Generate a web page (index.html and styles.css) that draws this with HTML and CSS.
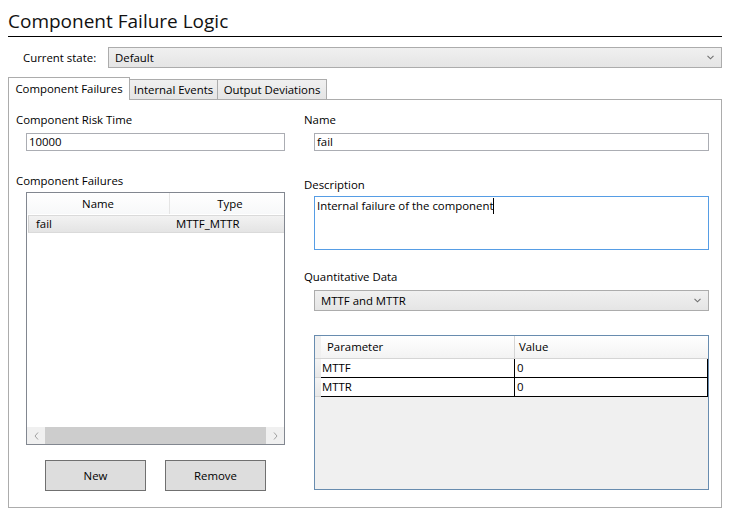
FILE: index.html
```html
<!DOCTYPE html>
<html>
<head>
<meta charset="utf-8">
<title>Component Failure Logic</title>
<link rel="stylesheet" href="styles.css">
</head>
<body>
<div class="window">
  <div class="title">Component Failure Logic</div>

  <div class="state-row">
    <span class="state-label">Current state:</span>
    <div class="combo">
      <span>Default</span>
      <svg class="chev" width="7" height="5" viewBox="0 0 7 5"><path d="M0.5 0.8 L3.5 3.8 L6.5 0.8" fill="none" stroke="#707070" stroke-width="1.1"/></svg>
    </div>
  </div>

  <div class="tabs">
    <div class="tab tab-active t1">Component Failures</div>
    <div class="tab t2">Internal Events</div>
    <div class="tab t3">Output Deviations</div>
  </div>

  <div class="panel">
    <div class="col col-left">
      <div class="label">Component Risk Time</div>
      <div class="textbox">10000</div>

      <div class="label lbl-failures">Component Failures</div>
      <div class="listview">
        <div class="lv-header">
          <div class="lv-hcell c-name">Name</div>
          <div class="lv-hcell c-type">Type</div>
        </div>
        <div class="lv-row selected">
          <div class="lv-cell c-name">fail</div>
          <div class="lv-cell c-type">MTTF_MTTR</div>
        </div>
        <div class="lv-fill"></div>
        <div class="hscroll">
          <div class="sb-arrow"><svg width="5" height="8" viewBox="0 0 5 8"><path d="M4 0.5 L1 4 L4 7.5" fill="none" stroke="#a0a0a0" stroke-width="1"/></svg></div>
          <div class="sb-thumb"></div>
          <div class="sb-arrow"><svg width="5" height="8" viewBox="0 0 5 8"><path d="M1 0.5 L4 4 L1 7.5" fill="none" stroke="#a0a0a0" stroke-width="1"/></svg></div>
        </div>
      </div>

      <div class="buttons">
        <button class="btn">New</button>
        <button class="btn">Remove</button>
      </div>
    </div>

    <div class="col col-right">
      <div class="label">Name</div>
      <div class="textbox">fail</div>

      <div class="label lbl-desc">Description</div>
      <div class="textarea">Internal failure of the component<span class="caret"></span></div>

      <div class="label lbl-quant">Quantitative Data</div>
      <div class="combo combo-quant">
        <span>MTTF and MTTR</span>
        <svg class="chev" width="7" height="5" viewBox="0 0 7 5"><path d="M0.5 0.8 L3.5 3.8 L6.5 0.8" fill="none" stroke="#707070" stroke-width="1.1"/></svg>
      </div>

      <div class="datagrid">
        <div class="dg-header">
          <div class="dg-corner"></div>
          <div class="dg-h dg-p">Parameter</div>
          <div class="dg-h dg-v">Value</div>
        </div>
        <div class="dg-row">
          <div class="dg-rh"></div>
          <div class="dg-c dg-p">MTTF</div>
          <div class="dg-c dg-v">0</div>
        </div>
        <div class="dg-row">
          <div class="dg-rh"></div>
          <div class="dg-c dg-p">MTTR</div>
          <div class="dg-c dg-v">0</div>
        </div>
      </div>
    </div>
  </div>
</div>
</body>
</html>
```

FILE: styles.css
```css
* {
  box-sizing: border-box;
}

html, body {
  margin: 0;
  padding: 0;
  background: #ffffff;
}

body {
  font-family: "Open Sans", "Noto Sans", sans-serif;
  font-size: 11.4px;
  color: #000000;
}

.window {
  width: 729px;
  height: 513px;
  padding: 8px 7px 0 8px;
  display: flex;
  flex-direction: column;
}

.title {
  height: 29px;
  line-height: 26px;
  font-size: 19px;
  border-bottom: 1px solid #000000;
  color: #111111;
}

.state-row {
  margin-top: 10px;
  height: 21px;
  display: flex;
  align-items: center;
}

.state-label {
  width: 100px;
  padding-left: 15px;
  flex-shrink: 0;
}

.combo {
  flex: 1;
  height: 21px;
  border: 1px solid #acacac;
  background: linear-gradient(#f0f0f0, #e5e5e5);
  display: flex;
  align-items: center;
  justify-content: space-between;
  padding: 0 7px 0 6px;
  line-height: 16px;
}

.chev {
  display: block;
}

.tabs {
  margin-top: 9px;
  height: 22px;
  display: flex;
  align-items: flex-end;
}

.tab {
  height: 20px;
  border: 1px solid #acacac;
  border-bottom: none;
  background: linear-gradient(#f0f0f0, #e5e5e5);
  display: flex;
  align-items: center;
  justify-content: center;
  line-height: 16px;
  margin-left: -1px;
}

.tab-active {
  height: 23px;
  margin-bottom: -1px;
  margin-left: 0;
  background: #ffffff;
  position: relative;
  z-index: 1;
}

.t1 { width: 122px; }
.t2 { width: 89px; }
.t3 { width: 110px; }

.panel {
  height: 409px;
  border: 1px solid #acacac;
  display: grid;
  grid-template-columns: 288px 1fr;
}

.col {
  display: flex;
  flex-direction: column;
  padding-top: 12px;
}

.col-left {
  padding-left: 7px;
  padding-right: 12px;
}

.col-right {
  padding-left: 7px;
  padding-right: 12px;
}

.label {
  height: 16px;
  line-height: 16px;
}

.textbox {
  margin-top: 5px;
  margin-left: 10px;
  height: 18px;
  border: 1px solid #abadb3;
  padding: 0 2px;
  line-height: 16px;
}

.lbl-failures {
  margin-top: 22px;
}

.listview {
  margin-top: 3px;
  margin-left: 10px;
  height: 253px;
  border: 1px solid #828790;
  display: flex;
  flex-direction: column;
  overflow: hidden;
}

.lv-header {
  height: 21px;
  display: flex;
  background: linear-gradient(#ffffff, #f7f8f9);
  flex-shrink: 0;
}

.lv-hcell {
  display: flex;
  align-items: center;
  justify-content: center;
  line-height: 16px;
  flex-shrink: 0;
}

.lv-hcell.c-name {
  border-right: 1px solid #e5e5e5;
}

.c-name {
  width: 143px;
}

.c-type {
  width: 120px;
}

.lv-row {
  margin-top: 1px;
  height: 18px;
  display: flex;
  flex-shrink: 0;
}

.lv-row.selected {
  margin-left: 1px;
  background: linear-gradient(#f2f2f2, #e4e4e4);
  border-top: 1px solid #dadada;
  border-bottom: 1px solid #dadada;
  border-left: 1px solid #d0d0d0;
}

.lv-cell {
  line-height: 16px;
  flex-shrink: 0;
}

.lv-cell.c-name {
  width: 141px;
  padding-left: 7px;
}

.lv-cell.c-type {
  padding-left: 6px;
}

.lv-fill {
  flex: 1;
}

.hscroll {
  height: 17px;
  display: flex;
  background: #f0f0f0;
  flex-shrink: 0;
}

.sb-arrow {
  width: 18px;
  display: flex;
  align-items: center;
  justify-content: center;
}

.sb-thumb {
  flex: 1;
  background: #cdcdcd;
}

.buttons {
  margin-top: 15px;
  padding-left: 29px;
  display: flex;
  gap: 19px;
}

.btn {
  width: 101px;
  height: 31px;
  border: 1px solid #707070;
  background: #dddddd;
  font-family: "Open Sans", "Noto Sans", sans-serif;
  font-size: 11.4px;
  color: #000000;
  padding: 0;
}

.lbl-desc {
  margin-top: 26px;
}

.textarea {
  margin-top: 3px;
  margin-left: 10px;
  height: 54px;
  border: 1px solid #569de5;
  padding: 1px 2px;
  line-height: 16px;
}

.caret {
  display: inline-block;
  width: 1px;
  height: 16px;
  background: #000000;
  vertical-align: top;
}

.lbl-quant {
  margin-top: 19px;
}

.combo-quant {
  flex: none;
  margin-top: 5px;
  margin-left: 10px;
  padding-left: 6px;
}

.datagrid {
  margin-top: 24px;
  margin-left: 10px;
  height: 155px;
  border: 1px solid #688caf;
  background: #f0f0f0;
  display: flex;
  flex-direction: column;
}

.dg-header {
  height: 23px;
  display: flex;
  background: linear-gradient(#ffffff, #f3f3f3);
  border-bottom: 1px solid #d5d5d5;
}

.dg-corner {
  width: 6px;
  background: #f0f0f0;
}

.dg-h {
  display: flex;
  align-items: center;
  line-height: 16px;
  padding-left: 6px;
}

.dg-h.dg-p {
  width: 194px;
  border-right: 1px solid #d5d5d5;
}

.dg-h.dg-v {
  width: 193px;
  padding-left: 4px;
}

.dg-row {
  height: 19px;
  display: flex;
}

.dg-rh {
  width: 6px;
  background: linear-gradient(#f4f4f4, #e8e8e8);
  border-bottom: 1px solid #d5d5d5;
}

.dg-c {
  background: #ffffff;
  border-bottom: 1px solid #000000;
  border-right: 1px solid #000000;
  line-height: 17px;
  padding-left: 1px;
}

.dg-c.dg-p {
  width: 194px;
}

.dg-c.dg-v {
  width: 193px;
  padding-left: 2px;
}
```
